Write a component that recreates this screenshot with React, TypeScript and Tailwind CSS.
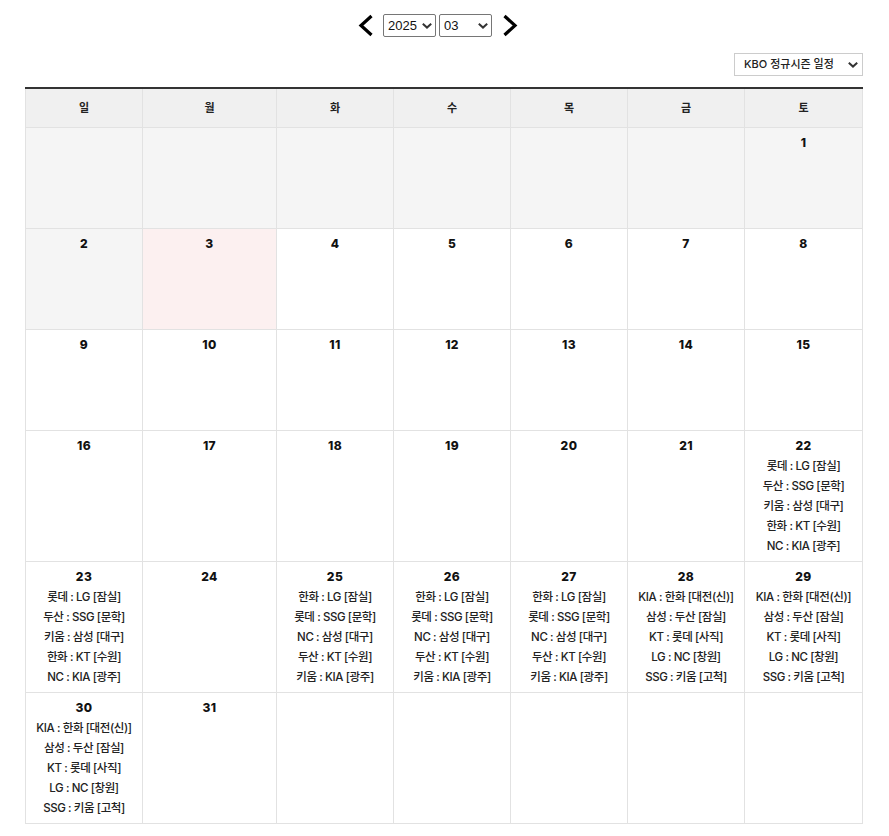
const WEEKDAYS = ["일", "월", "화", "수", "목", "금", "토"];

const SET_A = ["롯데 : LG [잠실]", "두산 : SSG [문학]", "키움 : 삼성 [대구]", "한화 : KT [수원]", "NC : KIA [광주]"];
const SET_B = ["한화 : LG [잠실]", "롯데 : SSG [문학]", "NC : 삼성 [대구]", "두산 : KT [수원]", "키움 : KIA [광주]"];
const SET_C = ["KIA : 한화 [대전(신)]", "삼성 : 두산 [잠실]", "KT : 롯데 [사직]", "LG : NC [창원]", "SSG : 키움 [고척]"];

const GAMES: Record<number, string[]> = {
  22: SET_A,
  23: SET_A,
  25: SET_B,
  26: SET_B,
  27: SET_B,
  28: SET_C,
  29: SET_C,
  30: SET_C,
};

const WEEKS: (number | null)[][] = [
  [null, null, null, null, null, null, 1],
  [2, 3, 4, 5, 6, 7, 8],
  [9, 10, 11, 12, 13, 14, 15],
  [16, 17, 18, 19, 20, 21, 22],
  [23, 24, 25, 26, 27, 28, 29],
  [30, 31, null, null, null, null, null],
];

function cellBg(rowIndex: number, day: number | null) {
  if (rowIndex === 0 || day === 2) return "bg-[#f5f5f5]";
  if (day === 3) return "bg-[#fcf0f0]";
  return "bg-white";
}

function Caret({ className }: { className: string }) {
  return (
    <svg
      className={`pointer-events-none absolute ${className}`}
      width="10"
      height="6"
      viewBox="0 0 10 6"
      fill="none"
      stroke="#333"
      strokeWidth="2"
    >
      <path d="M0.8 0.8 L5 4.6 L9.2 0.8" />
    </svg>
  );
}

function NativeSelect({ value }: { value: string }) {
  return (
    <div className="relative h-[23px] w-[53px]">
      <select
        defaultValue={value}
        className="block h-full w-full appearance-none rounded-[2px] border border-[#767676] bg-white pl-[4px] font-['Liberation_Sans',sans-serif] text-[13px] text-[#111]"
      >
        <option>{value}</option>
      </select>
      <Caret className="top-[9px] right-[4px]" />
    </div>
  );
}

export default function App() {
  return (
    <main className="min-h-[836px] bg-white pl-[25px] pr-[26px] font-['Inter','Noto_Sans_CJK_KR',sans-serif] text-[#111]">
      <div className="flex h-[53px] items-start justify-center pr-[12px] pt-[14px]">
        <button className="mr-[9px] flex h-[23px] w-[16px] items-center justify-center">
          <svg width="16" height="24" viewBox="0 0 16 24" fill="none" stroke="#000" strokeWidth="3.2">
            <path d="M13.5 2 L3 11.5 L13.5 21" />
          </svg>
        </button>
        <NativeSelect value="2025" />
        <div className="ml-[3px]">
          <NativeSelect value="03" />
        </div>
        <button className="ml-[10px] flex h-[23px] w-[16px] items-center justify-center">
          <svg width="16" height="24" viewBox="0 0 16 24" fill="none" stroke="#000" strokeWidth="3.2">
            <path d="M2.5 2 L13 11.5 L2.5 21" />
          </svg>
        </button>
      </div>

      <div className="flex h-[34px] items-start justify-end">
        <div className="relative h-[23px] w-[129px]">
          <select className="block h-full w-full appearance-none border border-[#ccc] bg-white pl-[9px] text-[11px] font-medium text-[#222]">
            <option>KBO 정규시즌 일정</option>
          </select>
          <Caret className="top-[9px] right-[5px]" />
        </div>
      </div>

      <table className="w-[838px] table-fixed border-collapse border-t-2 border-t-[#333] text-center">
        <colgroup>
          <col className="w-[117px]" />
          <col className="w-[134px]" />
          <col className="w-[117px]" />
          <col className="w-[117px]" />
          <col className="w-[117px]" />
          <col className="w-[117px]" />
          <col className="w-[118px]" />
        </colgroup>
        <thead>
          <tr className="h-[39px]">
            {WEEKDAYS.map((d) => (
              <th key={d} className="border border-t-0 border-[#e2e2e2] bg-[#f0f0f0] p-0 text-[11px] font-bold text-[#222]">
                {d}
              </th>
            ))}
          </tr>
        </thead>
        <tbody>
          {WEEKS.map((week, i) => (
            <tr key={i} className={i < 3 ? "h-[101px]" : "h-[131px]"}>
              {week.map((day, j) => (
                <td key={j} className={`border border-[#e2e2e2] p-0 pt-[7px] align-top ${cellBg(i, day)}`}>
                  {day !== null && (
                    <>
                      <div className="h-[18px] text-[12px] leading-[16px] font-extrabold tracking-[0.4px] text-[#111]">{day}</div>
                      {GAMES[day]?.map((g) => (
                        <div key={g} className="h-[20px] text-[11.5px] leading-[20px] font-medium tracking-[-0.4px] whitespace-nowrap text-[#222]">
                          {g}
                        </div>
                      ))}
                    </>
                  )}
                </td>
              ))}
            </tr>
          ))}
        </tbody>
      </table>
    </main>
  );
}
